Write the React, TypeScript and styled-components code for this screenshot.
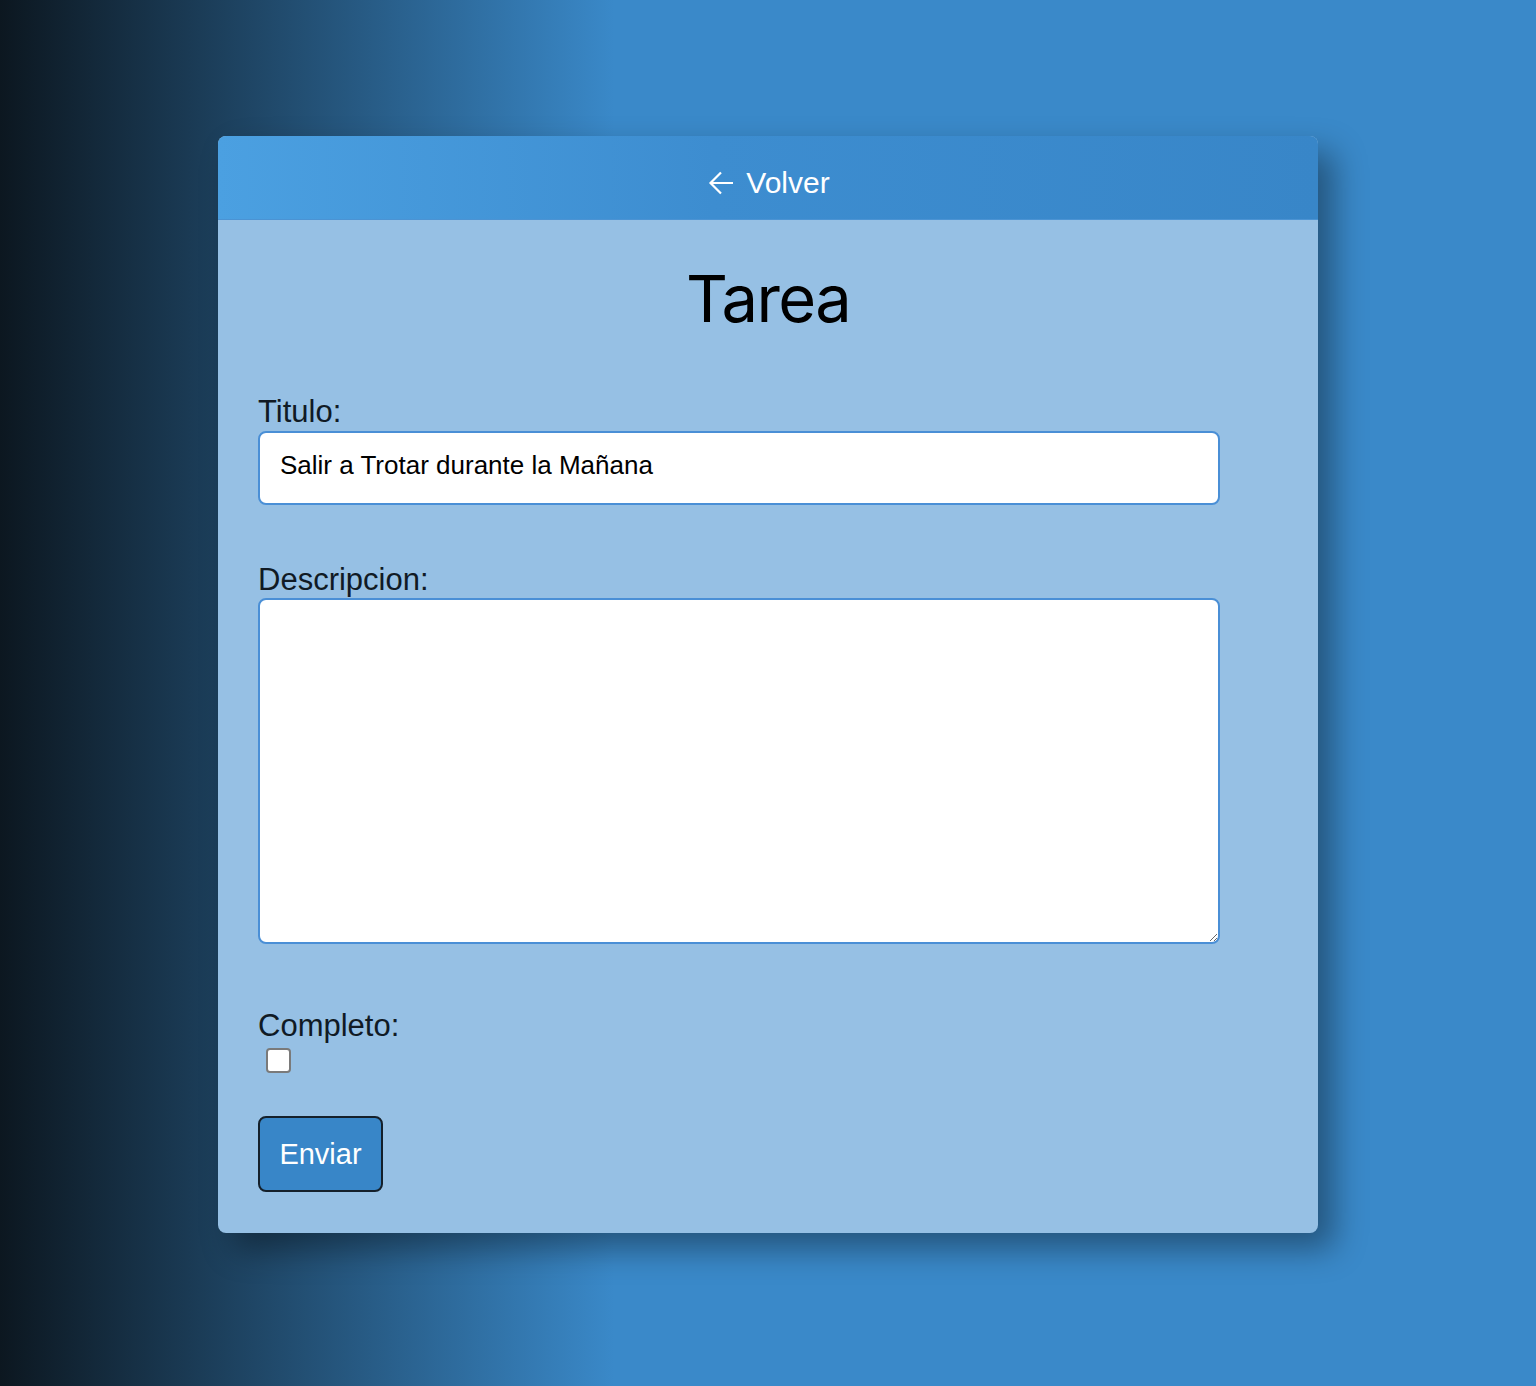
import React from "react";
import styled, { createGlobalStyle } from "styled-components";

const GlobalStyle = createGlobalStyle`
  html, body {
    margin: 0;
    padding: 0;
  }
  body {
    min-height: 1386px;
    background: linear-gradient(to right, #0c1720 0%, #3a89c9 40%, #3a89c9 100%);
    font-family: "Liberation Sans", Arial, sans-serif;
  }
`;

const Page = styled.div`
  min-height: 1386px;
  padding-top: 136px;
  box-sizing: border-box;
  display: flex;
  justify-content: center;
  align-items: flex-start;
`;

const Card = styled.div`
  width: 1100px;
  background: #96c0e4;
  border-radius: 8px;
  overflow: hidden;
  box-shadow: 16px 16px 32px rgba(0, 0, 0, 0.38);
`;

const Header = styled.div`
  height: 84px;
  display: flex;
  align-items: center;
  justify-content: center;
  background: linear-gradient(to right, #4ba0e1 0%, #3d8dd0 45%, #3886c8 100%);
  border-bottom: 1px solid #4b93d3;
  box-sizing: border-box;
`;

const BackLink = styled.a`
  display: flex;
  align-items: center;
  gap: 11px;
  color: #ffffff;
  text-decoration: none;
  font-family: "Liberation Sans", Arial, sans-serif;
  font-size: 30px;
  line-height: 34px;
  margin-top: 10px;
  margin-left: 2px;
`;

const Body = styled.div`
  padding: 0 40px 41px 40px;
`;

const Title = styled.h1`
  margin: 39px 0 0 0;
  text-align: center;
  font-family: Inter, "Liberation Sans", sans-serif;
  font-weight: 400;
  font-size: 65px;
  line-height: 80px;
  color: #000000;
  letter-spacing: -1.6px;
`;

const Form = styled.form`
  width: 962px;
  display: flex;
  flex-direction: column;
  align-items: flex-start;
`;

const Label = styled.label<{ $top: number }>`
  display: block;
  margin-top: ${(p) => p.$top}px;
  font-family: "Liberation Sans", Arial, sans-serif;
  font-size: 31px;
  line-height: 34px;
  color: #101a24;
`;

const TextInput = styled.input`
  display: block;
  margin-top: 2px;
  width: 962px;
  height: 74px;
  box-sizing: border-box;
  border: 2px solid #4a8fd6;
  border-radius: 8px;
  background: #ffffff;
  padding: 0 20px 5px 20px;
  font-family: "Liberation Sans", Arial, sans-serif;
  font-size: 26px;
  color: #000000;
  outline: none;
`;

const TextArea = styled.textarea`
  display: block;
  margin-top: 1px;
  width: 962px;
  height: 346px;
  box-sizing: border-box;
  border: 2px solid #4a8fd6;
  border-radius: 8px;
  background: #ffffff;
  padding: 14px 20px;
  font-family: "Liberation Sans", Arial, sans-serif;
  font-size: 26px;
  outline: none;
`;

const Check = styled.input`
  appearance: none;
  width: 25px;
  height: 25px;
  box-sizing: border-box;
  margin: 5px 0 0 8px;
  background: #ffffff;
  border: 2px solid #7a7a7a;
  border-radius: 4px;
  cursor: pointer;

  &:checked {
    background: #3886c8;
    border-color: #3886c8;
  }
`;

const SubmitButton = styled.button`
  margin-top: 43px;
  width: 125px;
  height: 76px;
  box-sizing: border-box;
  background: #3886c8;
  border: 2px solid #14202b;
  border-radius: 8px;
  color: #ffffff;
  font-family: "Liberation Sans", Arial, sans-serif;
  font-size: 29px;
  padding: 0;
  cursor: pointer;
`;

const ArrowIcon = () => (
  <svg width="27" height="26" viewBox="0 0 27 26" fill="none">
    <path
      d="M25 13H3M13 2.5L2.5 13L13 23.5"
      stroke="#ffffff"
      strokeWidth="2.2"
      strokeLinecap="butt"
      strokeLinejoin="miter"
    />
  </svg>
);

export default function App() {
  return (
    <>
      <GlobalStyle />
      <Page>
        <Card>
          <Header>
            <BackLink href="#">
              <ArrowIcon />
              <span>Volver</span>
            </BackLink>
          </Header>
          <Body>
            <Title>Tarea</Title>
            <Form onSubmit={(e) => e.preventDefault()}>
              <Label $top={56} htmlFor="titulo">
                Titulo:
              </Label>
              <TextInput
                id="titulo"
                type="text"
                defaultValue="Salir a Trotar durante la Mañana"
              />
              <Label $top={58} htmlFor="descripcion">
                Descripcion:
              </Label>
              <TextArea id="descripcion" />
              <Label $top={65} htmlFor="completo">
                Completo:
              </Label>
              <Check id="completo" type="checkbox" />
              <SubmitButton type="submit">Enviar</SubmitButton>
            </Form>
          </Body>
        </Card>
      </Page>
    </>
  );
}
